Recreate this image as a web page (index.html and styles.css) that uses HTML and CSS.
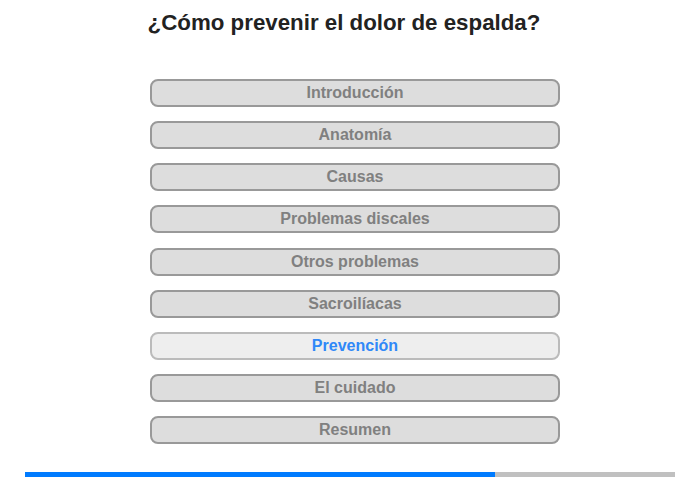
FILE: index.html
```html
<!DOCTYPE html>
<html>
<head>
    <meta charset="UTF-8">
    <title>Prevención del dolor de espalda</title>
    <link rel="stylesheet" href="styles.css">
</head>
<body>
    <h1 class="title">¿Cómo prevenir el dolor de espalda?</h1>

    <nav class="chapters">
        <button type="button" class="chapter">Introducción</button>
        <button type="button" class="chapter">Anatomía</button>
        <button type="button" class="chapter">Causas</button>
        <button type="button" class="chapter">Problemas discales</button>
        <button type="button" class="chapter">Otros problemas</button>
        <button type="button" class="chapter">Sacroilíacas</button>
        <button type="button" class="chapter active">Prevención</button>
        <button type="button" class="chapter">El cuidado</button>
        <button type="button" class="chapter">Resumen</button>
    </nav>

    <div class="progress">
        <div class="progress-fill" style="width: 72.3%;"></div>
    </div>
</body>
</html>
```

FILE: styles.css
```css
body {
    font-family: "Liberation Sans", Arial, sans-serif;
    margin: 0;
    background: #fff;
}
.title {
    font-size: 22.3px;
    font-weight: bold;
    color: #222;
    text-align: center;
    margin: 0;
    padding: 10px 12px 0 0;
    line-height: 25px;
}
.chapters {
    display: flex;
    flex-direction: column;
    gap: 14.125px;
    width: 410px;
    margin: 44px 0 0 150px;
}
.chapter {
    height: 28px;
    padding: 0;
    border: 2px solid #999;
    border-radius: 8px;
    background: #ddd;
    color: #808080;
    font-family: inherit;
    font-size: 16px;
    font-weight: bold;
    cursor: pointer;
}
.chapter.active {
    background: #eee;
    border-color: #bbb;
    color: #2f88f8;
}
.progress {
    height: 5px;
    margin: 28px 25px 0;
    background: #c0c0c0;
}
.progress-fill {
    height: 100%;
    background: #007bff;
}
```
